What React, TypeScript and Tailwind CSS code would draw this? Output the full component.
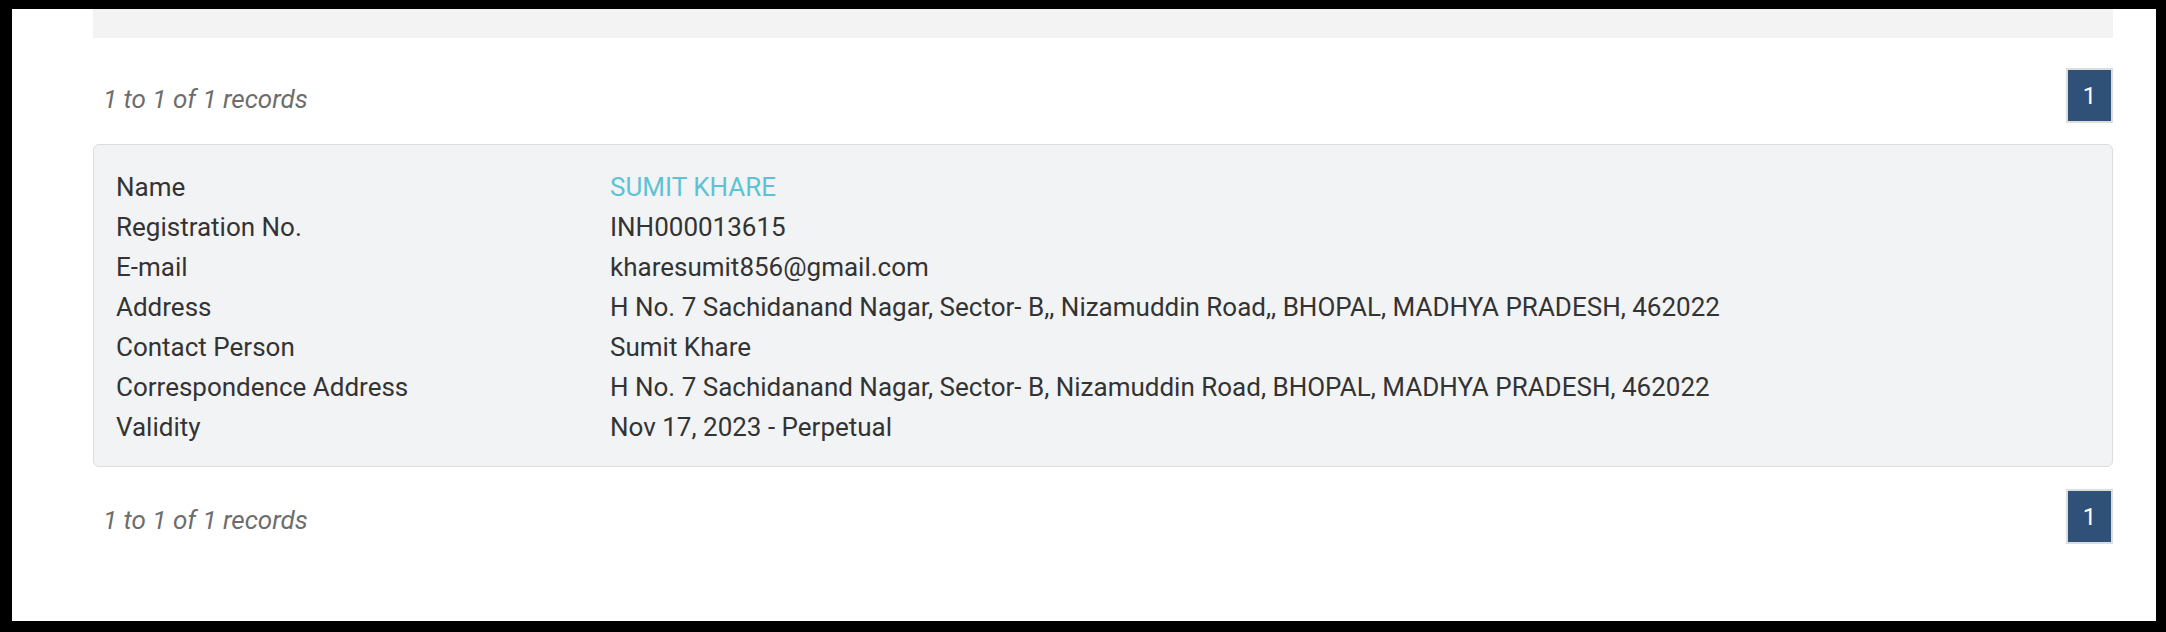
import React from 'react'

const rows: { label: string; value: string; link?: boolean }[] = [
  { label: 'Name', value: 'SUMIT KHARE', link: true },
  { label: 'Registration No.', value: 'INH000013615' },
  { label: 'E-mail', value: 'kharesumit856@gmail.com' },
  { label: 'Address', value: 'H No. 7 Sachidanand Nagar, Sector- B,, Nizamuddin Road,, BHOPAL, MADHYA PRADESH, 462022' },
  { label: 'Contact Person', value: 'Sumit Khare' },
  { label: 'Correspondence Address', value: 'H No. 7 Sachidanand Nagar, Sector- B, Nizamuddin Road, BHOPAL, MADHYA PRADESH, 462022' },
  { label: 'Validity', value: 'Nov 17, 2023 - Perpetual' },
]

function Pager() {
  return (
    <div className="flex items-center justify-between h-[55px]">
      <span className="pl-[10px] mt-[7px] italic text-[26px] leading-[40px] text-[#6d6d6d]">1 to 1 of 1 records</span>
      <a className="flex items-center justify-center w-[47px] h-[55px] border-2 border-[#dddddd] bg-[#2f5077] text-white text-[24px]">
        1
      </a>
    </div>
  )
}

export default function App() {
  return (
    <div
      className="h-[632px] bg-black pt-[9px] pl-[12px] pr-[10px] pb-[11px]"
      style={{ fontFamily: 'Roboto, "Liberation Sans", sans-serif' }}
    >
      <div className="h-full bg-white pl-[81px] pr-[43px]">
        {/* filter bar remnant */}
        <div className="h-[29px] bg-[#f4f3f4]" />

        <div className="mt-[30px]">
          <Pager />
        </div>

        {/* Result card */}
        <div className="mt-[21px] rounded-[6px] border border-[#dcdddf] bg-[#f2f3f5] pt-[22px] pb-[19px] pl-[22px]">
          {rows.map((r) => (
            <div key={r.label} className="flex text-[26px] leading-[40px] text-[#333333]">
              <div className="w-[494px] shrink-0">{r.label}</div>
              <div className={r.link ? 'text-[#5fc2d4]' : ''}>{r.value}</div>
            </div>
          ))}
        </div>

        <div className="mt-[22px]">
          <Pager />
        </div>
      </div>
    </div>
  )
}
